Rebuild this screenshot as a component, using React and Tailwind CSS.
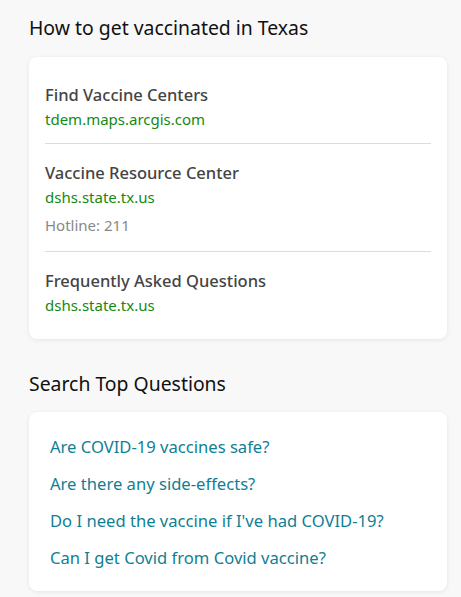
export default function App() {
  const places = [
    { title: 'Find Vaccine Centers', link: 'tdem.maps.arcgis.com' },
    { title: 'Vaccine Resource Center', link: 'dshs.state.tx.us', note: 'Hotline: 211' },
    { title: 'Frequently Asked Questions', link: 'dshs.state.tx.us' },
  ];
  const questions = [
    'Are COVID-19 vaccines safe?',
    'Are there any side-effects?',
    "Do I need the vaccine if I've had COVID-19?",
    'Can I get Covid from Covid vaccine?',
  ];

  return (
    <div className="min-h-[597px] bg-[#f8f8f8] pl-[29px] pr-[14px] pt-[16px] pb-[7px] font-['Noto_Sans',sans-serif]">
      {/* Vaccination places */}
      <h2 className="text-[19.4px] leading-[24px] text-[#111]">How to get vaccinated in Texas</h2>
      <div className="mt-[17px] rounded-lg bg-white px-4 pt-[26px] pb-[22px] shadow-[0_1px_4px_rgba(0,0,0,0.08)]">
        {places.map((p, i) => (
          <div key={p.title} className={i > 0 ? 'border-t border-[#dcdcdc] pt-[17px]' : ''}>
            <div className={i < places.length - 1 ? 'pb-[12px]' : ''}>
              <div className="text-[16.5px] leading-[24px] font-medium text-[#444]">{p.title}</div>
              <div className="text-[15px] leading-[24px] text-[#138a13]">{p.link}</div>
              {p.note && <div className="mt-[4px] pb-[2px] text-[15px] leading-[24px] text-[#888]">{p.note}</div>}
            </div>
          </div>
        ))}
      </div>

      {/* Top questions */}
      <h2 className="mt-[33px] text-[19.4px] leading-[24px] text-[#111]">Search Top Questions</h2>
      <div className="mt-[16px] rounded-lg bg-white px-[21px] pt-[23px] pb-[21px] shadow-[0_1px_4px_rgba(0,0,0,0.08)]">
        <div className="flex flex-col gap-[13px]">
          {questions.map((q) => (
            <a key={q} className="text-[16.6px] leading-[24px] text-[#0f7f94]">{q}</a>
          ))}
        </div>
      </div>
    </div>
  );
}
